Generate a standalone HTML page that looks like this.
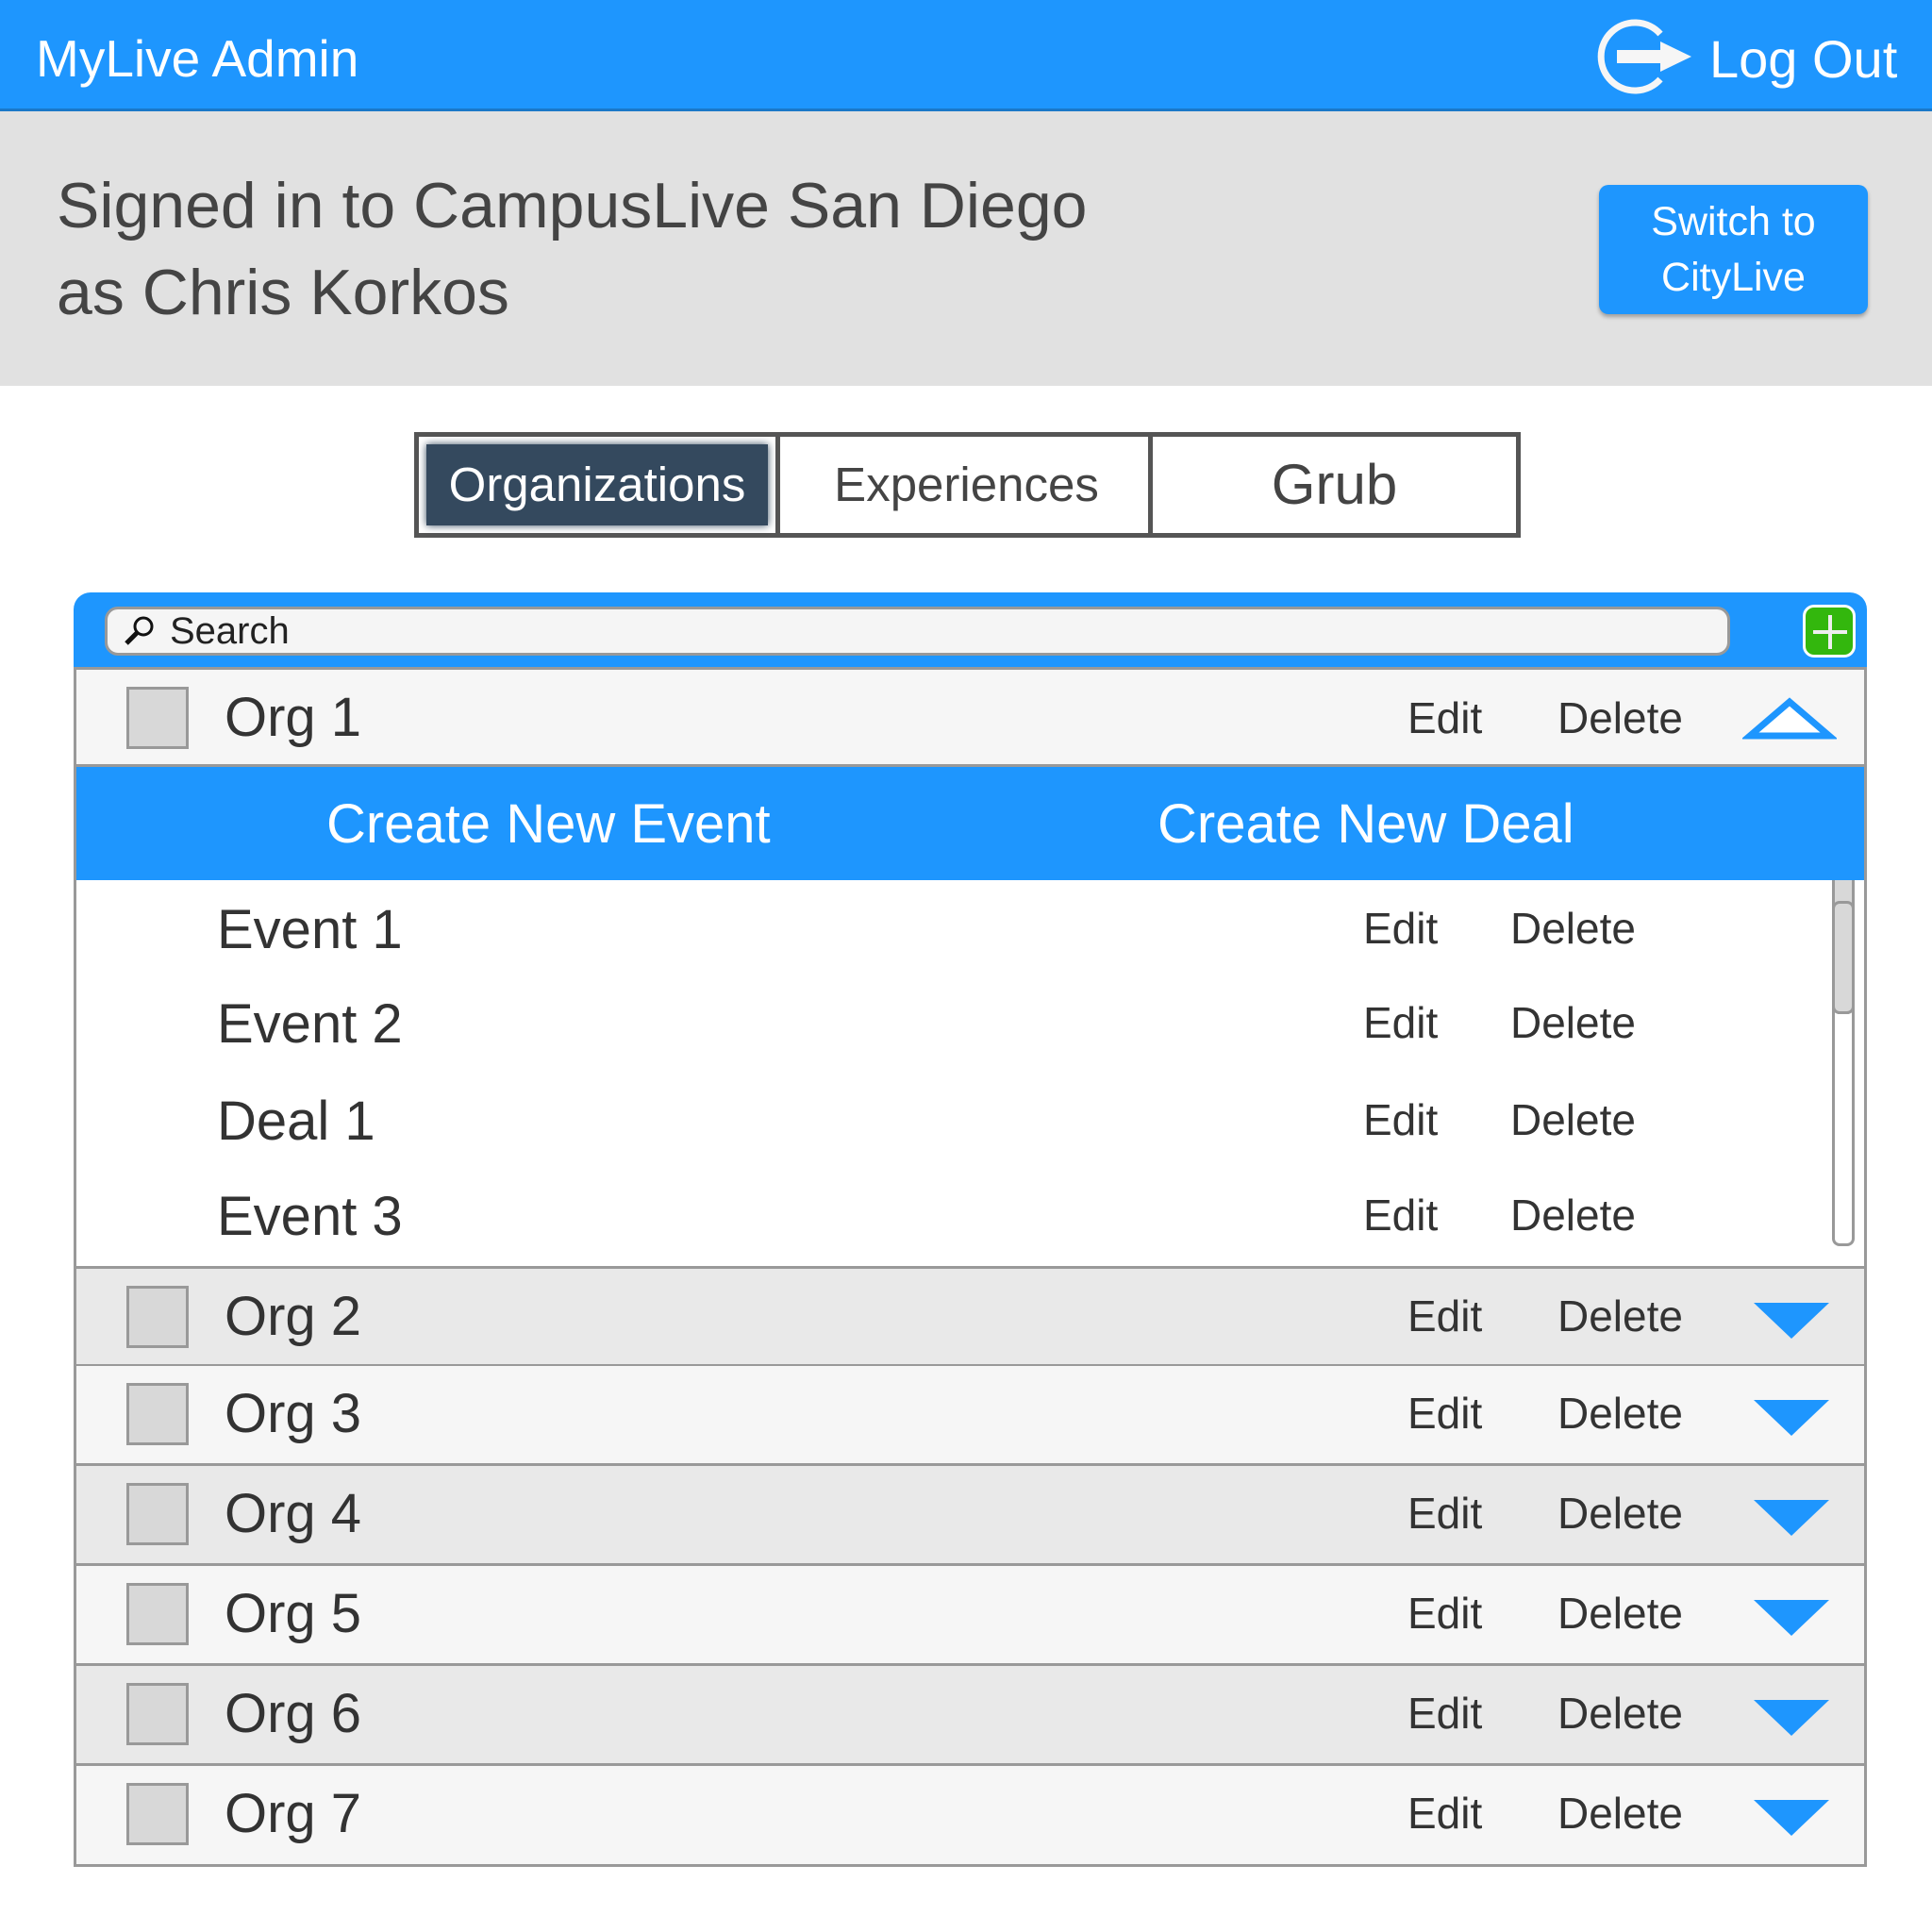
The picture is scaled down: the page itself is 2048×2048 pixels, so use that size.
<!DOCTYPE html>
<html><head><meta charset="utf-8"><style>
*{margin:0;padding:0;box-sizing:border-box}
body{width:2048px;height:2048px;background:#fff;font-family:"Liberation Sans",sans-serif;color:#333;position:relative;overflow:hidden}
.a{position:absolute}
.hdr{left:0;top:0;width:2048px;height:118px;background:#1e96fe;border-bottom:3px solid #1a78c8}
.gray{left:0;top:118px;width:2048px;height:291px;background:#e1e1e1}
.row{position:absolute;left:78px;width:1901px;border-left:3px solid #999;border-right:3px solid #999;border-bottom:3px solid #999}
.cb{position:absolute;left:53px;width:66px;height:66px;background:#d8d8d8;border:3px solid #999}
.t{position:absolute;font-size:58px;line-height:1}
.e{position:absolute;font-size:46px;line-height:1}
</style></head><body>
<div class="a hdr"></div>
<div class="a" style="left:38px;top:30px;font-size:55px;color:#fff">MyLive Admin</div>
<svg class="a" style="left:1690px;top:14px" width="120" height="90" viewBox="0 0 120 90">
<path d="M70 22 A36 36 0 1 0 70 70" fill="none" stroke="#f6f6f6" stroke-width="7"/>
<rect x="24" y="39" width="56" height="14" fill="#f6f6f6"/><polygon points="70,30 103,46 70,62" fill="#f6f6f6"/></svg>
<div class="a" style="left:1812px;top:30px;font-size:56px;color:#fff">Log Out</div>
<div class="a gray"></div>
<div class="a" style="left:60px;top:172px;font-size:68px;line-height:92px;color:#444">Signed in to CampusLive San Diego<br>as Chris Korkos</div>
<div class="a" style="left:1695px;top:196px;width:285px;height:137px;background:#1e96fe;border-radius:10px;box-shadow:0 3px 4px rgba(0,0,0,.3);color:#fff;font-size:43px;line-height:59px;text-align:center;padding-top:10px">Switch to<br>CityLive</div>
<div class="a" style="left:439px;top:458px;width:1173px;height:112px;border:5px solid #555;background:#fff"></div>
<div class="a" style="left:444px;top:463px;width:383px;height:102px;border-right:5px solid #555"><div style="position:absolute;left:8px;top:8px;right:8px;bottom:8px;background:#34495e;box-shadow:0 0 8px #34495e;color:#fff;font-size:51px;text-align:center;line-height:86px">Organizations</div></div>
<div class="a" style="left:832px;top:463px;width:390px;height:102px;border-right:5px solid #555;font-size:51px;text-align:center;line-height:102px;color:#444">Experiences</div>
<div class="a" style="left:1222px;top:463px;width:385px;height:102px;font-size:60px;text-align:center;line-height:102px;color:#444">Grub</div>

<div class="a" style="left:78px;top:628px;width:1901px;height:82px;background:#1e96fe;border-radius:18px 18px 0 0"></div>
<div class="a" style="left:111px;top:643px;width:1723px;height:52px;background:#f5f5f5;border:3px solid #999;border-radius:14px"></div>
<svg class="a" style="left:130px;top:650px" width="36" height="36" viewBox="0 0 36 36"><circle cx="22" cy="14" r="9" fill="none" stroke="#111" stroke-width="3"/><line x1="15" y1="21" x2="4" y2="32" stroke="#111" stroke-width="5"/></svg>
<div class="a" style="left:180px;top:647px;font-size:40px;color:#222">Search</div>
<div class="a" style="left:1911px;top:641px;width:56px;height:56px;background:#33b70d;border:3px solid #fff;border-radius:12px"><div style="position:absolute;left:24px;top:8px;width:4px;height:36px;background:#eee"></div><div style="position:absolute;left:8px;top:24px;width:36px;height:4px;background:#eee"></div></div>

<div class="row" style="top:707px;height:106px;background:#f6f6f6;border-top:3px solid #999">
<div class="cb" style="top:18px"></div><div class="t" style="left:157px;top:22px">Org 1</div>
<div class="e" style="left:1411px;top:28px">Edit</div><div class="e" style="left:1570px;top:28px">Delete</div>
<svg style="position:absolute;left:1766px;top:28px" width="100" height="48"><polygon points="50,6 92,42 8,42" fill="#fff" stroke="#1e96fe" stroke-width="7"/></svg></div>
<div class="a" style="left:78px;top:813px;width:1901px;height:120px;background:#1e96fe;border-left:3px solid #999;border-right:3px solid #999;color:#fff;font-size:58px">
<div style="position:absolute;left:265px;top:27px">Create New Event</div><div style="position:absolute;left:1146px;top:27px">Create New Deal</div></div>
<div class="row" style="top:933px;height:412px;background:#fff">
<div style="position:absolute;left:1861px;top:0;width:24px;height:388px;border:3px solid #999;border-top:none;border-radius:0 0 8px 8px;background:#fff"></div>
<div style="position:absolute;left:1861px;top:0;width:24px;height:142px;background:#d8d8d8;border:3px solid #999;border-top:none;border-radius:0 0 8px 8px"></div>
<div style="position:absolute;left:1861px;top:22px;width:24px;height:120px;border:3px solid #999;border-radius:8px;background:#d8d8d8"></div>
<div class="t" style="left:149px;top:24px">Event 1</div><div class="e" style="left:1364px;top:28px">Edit</div><div class="e" style="left:1520px;top:28px">Delete</div>
<div class="t" style="left:149px;top:124px">Event 2</div><div class="e" style="left:1364px;top:128px">Edit</div><div class="e" style="left:1520px;top:128px">Delete</div>
<div class="t" style="left:149px;top:227px">Deal 1</div><div class="e" style="left:1364px;top:231px">Edit</div><div class="e" style="left:1520px;top:231px">Delete</div>
<div class="t" style="left:149px;top:328px">Event 3</div><div class="e" style="left:1364px;top:332px">Edit</div><div class="e" style="left:1520px;top:332px">Delete</div>
</div>
<div id="orgs"></div>
<script>
var tops=[1342,1448,1554,1660,1766,1872],hs=[107,106,106,106,106,107],h='';
for(var i=0;i<6;i++){var bg=i%2==0?'#e9e9e9':'#f6f6f6';
h+='<div class="row" style="top:'+tops[i]+'px;height:'+hs[i]+'px;background:'+bg+';'+(i==0?'border-top:3px solid #999':'')+'"><div class="cb" style="top:18px"></div><div class="t" style="left:157px;top:22px">Org '+(i+2)+'</div><div class="e" style="left:1411px;top:27px">Edit</div><div class="e" style="left:1570px;top:27px">Delete</div><svg style="position:absolute;left:1776px;top:34px" width="84" height="42"><polygon points="2,2 82,2 42,40" fill="#1e96fe"/></svg></div>';}
document.getElementById('orgs').innerHTML=h;
</script>
</body></html>
